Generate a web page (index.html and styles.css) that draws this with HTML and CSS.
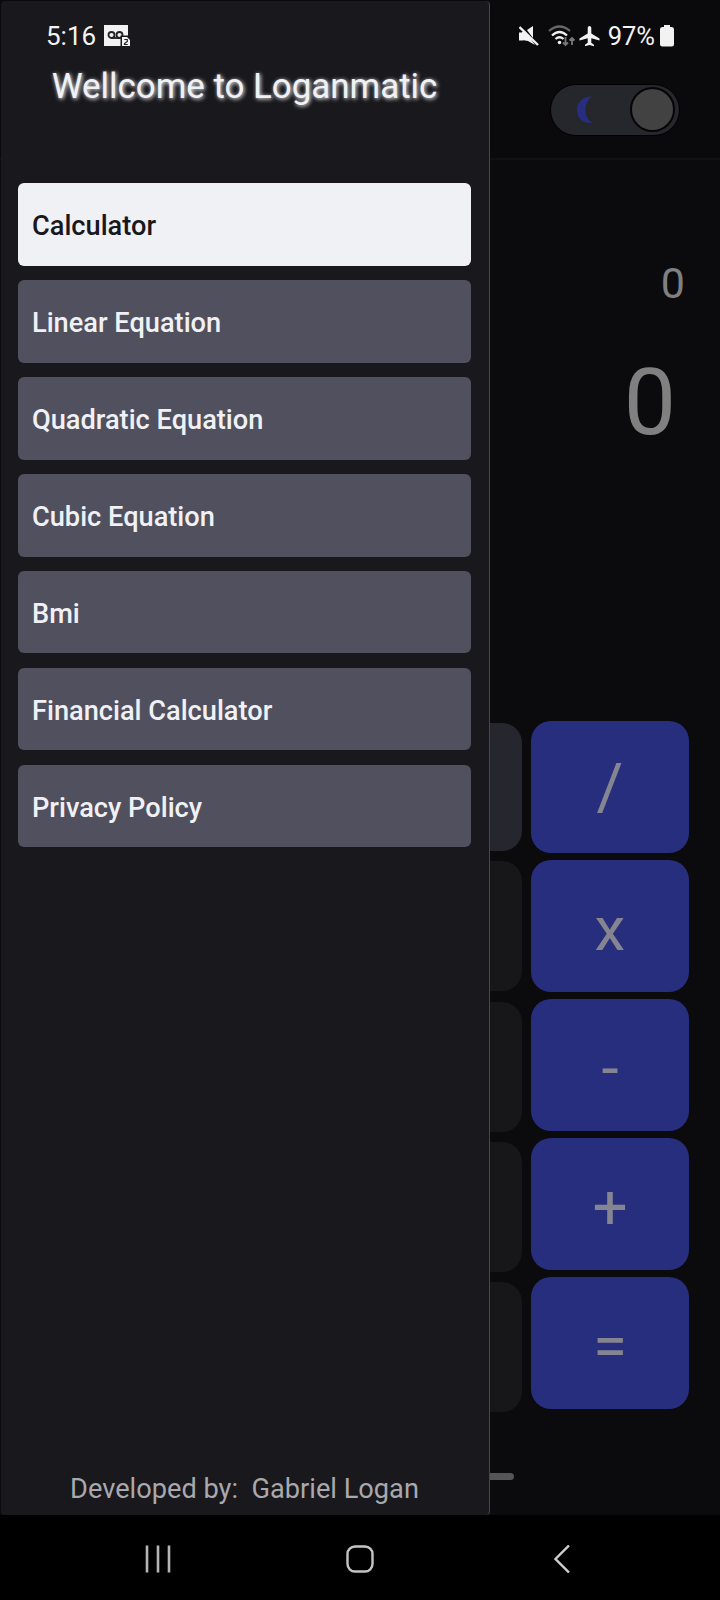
FILE: index.html
```html
<!DOCTYPE html>
<html lang="en">
<head>
  <meta charset="UTF-8" />
  <meta name="viewport" content="width=device-width, initial-scale=1.0" />
  <title>Loganmatic</title>
  <link rel="stylesheet" href="styles.css">
</head>
<body>
  <div class="screen">
    <div class="app">
      <header class="header">
        <div class="status status-right">
          <svg class="mute" width="20" height="22" viewBox="0 0 20 22">
            <path d="M0 7.500h4v8H0zM3 7l3-1 10 14-7-4-6-1zM8 5l6-4v12z" fill="#f2f2f2" />
            <path d="M.5 2l18.500 18" stroke="#f2f2f2" stroke-width="2.400" />
          </svg>
          <svg class="wifi" width="28" height="22" viewBox="0 0 28 22" fill="none">
            <path d="M1 6q10.500-9 21 0" stroke="#68686a" stroke-width="2.300" />
            <path d="M4 10.500q7.500-7 15 0M7.500 14q4-3.500 8 0" stroke="#eee" stroke-width="2.300" />
            <circle cx="11.500" cy="17.500" r="1.800" fill="#eee" />
            <path d="M17.500 12v8M15 17.500l2.500 2.500 2.500-2.500M24 20v-7M21.500 15.500l2.500-2.500 2.500 2.500" stroke="#77777a" stroke-width="1.800" />
          </svg>
          <svg class="plane" width="21" height="21" viewBox="0 0 21 21">
            <path d="M10.500 0c1.200 0 1.800 1 1.800 2.200v5.300l8.200 5v2l-8.200-2.300v4.600l2.700 2v1.500l-4.500-1.200L6 20.300v-1.500l2.700-2v-4.600L.5 14.500v-2l8.200-5V2.200C8.700 1 9.300 0 10.500 0z" fill="#f2f2f2" />
          </svg>
          <span class="percent">97%</span>
          <svg class="battery" width="14" height="22" viewBox="0 0 14 22">
            <path d="M4 0h6v2h1.500a2.500 2.500 0 0 1 2.500 2.500v14.500a2.500 2.500 0 0 1-2.500 2.500h-9A2.500 2.500 0 0 1 0 19V4.500a2.500 2.500 0 0 1 2.500-2.500H4z" fill="#f2f2f2" />
          </svg>
        </div>
        <div class="toggle">
          <svg class="moon" width="16" height="28" viewBox="0 0 16 28">
            <path d="M15.500.5C6 0 0 6 0 14s6 14 15.500 13C10.500 24 8.500 19.500 8.500 14s2-10.500 7-13.500z" fill="#272e80" />
          </svg>
          <span class="knob"></span>
        </div>
      </header>

      <div class="display">
        <div class="history">0</div>
        <div class="result">0</div>
      </div>

      <div class="keypad">
        <div class="keys-left">
          <div class="key light"></div>
          <div class="key"></div>
          <div class="key"></div>
          <div class="key"></div>
          <div class="key"></div>
        </div>
        <div class="keys-op">
          <button class="op op-slash">/</button>
          <button class="op">x</button>
          <button class="op">-</button>
          <button class="op">+</button>
          <button class="op">=</button>
        </div>
      </div>
      <div class="handle"></div>
    </div>

    <aside class="drawer">
      <div class="status status-left">
        <span>5:16</span>
        <svg class="voicemail" width="27" height="22" viewBox="0 0 27 22">
          <path d="M0 0h24v21H0z" fill="#f2f2f2" />
          <g fill="none" stroke="#222" stroke-width="1.800">
            <circle cx="7.500" cy="10" r="3" />
            <circle cx="15.500" cy="10" r="3" />
            <path d="M7.500 13h8" />
          </g>
          <path d="M16.500 10.500h7.500l3 3V22H16.500z" fill="#19181d" />
          <path d="M18 12h5l3 3v6h-8z" fill="#f2f2f2" />
          <path d="M20.300 14.500h3v2l-2.800 2v1h3.300" fill="none" stroke="#222" stroke-width="1.200" />
        </svg>
      </div>
      <h1 class="title">Wellcome to Loganmatic</h1>
      <nav class="menu">
        <a class="item active">Calculator</a>
        <a class="item">Linear Equation</a>
        <a class="item">Quadratic Equation</a>
        <a class="item">Cubic Equation</a>
        <a class="item">Bmi</a>
        <a class="item">Financial Calculator</a>
        <a class="item">Privacy Policy</a>
      </nav>
      <p class="credit">Developed by:&nbsp; Gabriel Logan</p>
    </aside>
  </div>

  <footer class="navbar">
    <svg width="28" height="28" viewBox="0 0 28 28" fill="none" stroke="#b5b5b5" stroke-width="2.600">
      <path d="M3 .5v27M14 .5v27M25 .5v27" />
    </svg>
    <svg width="28" height="28" viewBox="0 0 28 28" fill="none" stroke="#c4c4c4" stroke-width="2.400">
      <rect x="1.500" y="1.500" width="25" height="25" rx="7.500" />
    </svg>
    <svg width="28" height="28" viewBox="0 0 28 28" fill="none" stroke="#cfcfcf" stroke-width="2.400">
      <path d="M22 .5L8.500 14 22 27.500" />
    </svg>
  </footer>
</body>
</html>
```
FILE: styles.css
```css
* { box-sizing: border-box; }
body { margin: 0; width: 720px; height: 1600px; background: #000; font-family: Roboto, sans-serif; overflow: hidden; }
.screen { position: relative; height: 1515px; }

/* calculator under the drawer */
.app { height: 1515px; background: #0b0b0d; display: flex; flex-direction: column; }
.header { height: 160px; background: #0a0a0c; border-bottom: 2px solid #111114; display: flex; flex-direction: column; align-items: flex-end; }
.status { display: flex; align-items: center; color: #f2f2f2; font-size: 26px; line-height: 30px; }
.status-right { padding: 21px 46px 0 0; height: 51px; }
.wifi { margin-left: 9px; }
.plane { margin-left: 3px; }
.percent { margin-left: 8px; font-size: 25.5px; }
.battery { margin-left: 5px; }
.toggle { width: 130px; height: 52px; margin: 32.5px 40px 0 0; padding: 0 4px 0 26px; border: 1px solid #000;
  border-radius: 26px; background: #26262d; display: flex; align-items: center; justify-content: space-between; }
.knob { width: 45px; height: 45px; border-radius: 50%; background: #424242; border: 2px solid #050507; }

.display { height: 561px; padding: 98px 35px 0 0; text-align: right; color: #808080; }
.history { font-size: 43px; line-height: 50px; }
.result { font-size: 93px; line-height: 110px; padding: 40px 9px 0 0; }

.keypad { display: flex; gap: 9px; padding-right: 31px; }
.keys-left { flex: 1; margin-left: 31px; padding-top: 2px; display: flex; flex-direction: column; gap: 10.3px; }
.key { height: 130px; border-radius: 20px; background: #17171a; }
.key.light { height: 128px; background: #26272e; }
.keys-op { width: 158px; display: flex; flex-direction: column; gap: 7px; }
.op { height: 132px; padding: 3px 0 0; border: none; border-radius: 20px; background: #272e7e; color: #858591;
  font-family: inherit; font-size: 62px; line-height: 132px; }
.op-slash { padding-top: 0; font-size: 65px; }
.handle { width: 308px; height: 7px; margin: 61px auto 0; border-radius: 4px; background: #555; }

/* drawer */
.drawer { position: absolute; top: 1px; left: 1px; width: 489px; height: 1514px; padding: 0 18px 0 17px; background: #19181d;
  border-right: 1px solid #47474a; border-radius: 4px; display: flex; flex-direction: column; }
.status-left { height: 50px; padding: 20px 0 0 28px; gap: 8px; }
.title { margin: 15px 0 0; font-size: 34.9px; line-height: 42px; font-weight: 400; text-align: center; color: #f0f1f5;
  text-shadow: 1px 1px 4px #fff; white-space: nowrap; }
.menu { margin-top: 75.3px; display: flex; flex-direction: column; gap: 14.2px; }
.item { height: 82.7px; padding-left: 14px; border-radius: 6px; background: #50505f; color: #f0f1f5;
  font-size: 27.2px; font-weight: 500; line-height: 86px; }
.item.active { background: #f0f1f5; color: #19181d; }
.credit { margin: auto 0 9px; text-align: center; font-size: 27.2px; line-height: 34px; color: #a9a9ad; }

/* android buttons */
.navbar { height: 85px; padding: 2px 0 0 144px; display: flex; align-items: center; gap: 173.5px; background: #000; }
```
